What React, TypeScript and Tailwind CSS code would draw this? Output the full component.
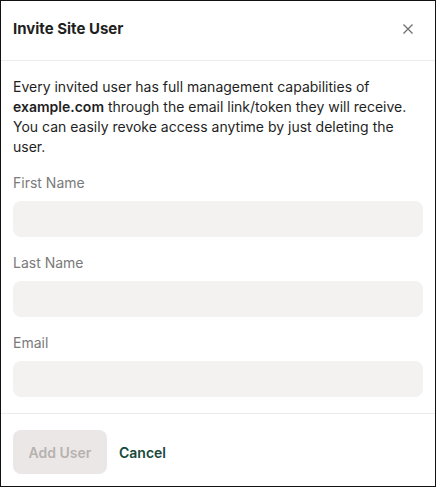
import React from 'react';

const Field: React.FC<{ label: string; type?: string }> = ({ label, type = 'text' }) => (
  <div className="flex flex-col gap-2">
    <label className="text-[14px] leading-5 text-[#7a7a7a]">{label}</label>
    <input
      type={type}
      className="h-9 w-full rounded-lg bg-[#f3f2f1] px-3 text-[14px] text-[#1f1f1f] outline-none"
    />
  </div>
);

export default function App() {
  return (
    <div
      className="flex h-[487px] w-[436px] flex-col border border-[#111] bg-white text-[#1f1f1f]"
      style={{ fontFamily: 'Inter, "Liberation Sans", sans-serif' }}
    >
      <div className="flex h-[60px] items-center justify-between border-b border-[#ececec] pl-3 pr-[22px] pb-[3px]">
        <h2 className="text-[15px] font-bold">Invite Site User</h2>
        <button className="text-[#707070]">
          <svg width="10" height="10" viewBox="0 0 10 10" stroke="currentColor" strokeWidth="1.3">
            <path d="M0.5 0.5l9 9M9.5 0.5l-9 9" />
          </svg>
        </button>
      </div>

      <div className="flex flex-col gap-4 border-b border-[#ececec] px-3 pt-4 pb-4">
        <p className="text-[14px] leading-5">
          Every invited user has full management capabilities of <b className="font-semibold">example.com</b>{' '}
          through the email link/token they will receive. You can easily revoke access anytime by just deleting the
          user.
        </p>
        <Field label="First Name" />
        <Field label="Last Name" />
        <Field label="Email" type="email" />
      </div>

      <div className="flex items-center gap-3 px-3 pt-4">
        <button
          disabled
          className="h-11 w-[94px] rounded-lg bg-[#ebe7e6] text-[14px] font-semibold text-[#b7b2b0]"
        >
          Add User
        </button>
        <button className="text-[14px] font-semibold text-[#17493b]">Cancel</button>
      </div>
    </div>
  );
}
